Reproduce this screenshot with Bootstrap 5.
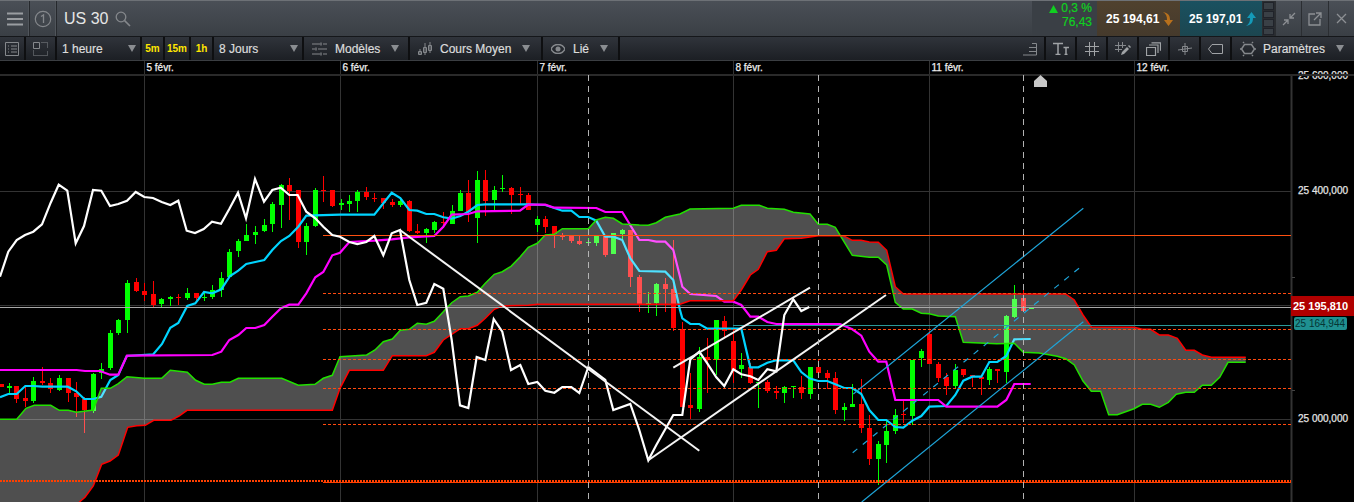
<!DOCTYPE html>
<html lang="fr">

<head>
    <meta charset="UTF-8" />
    <meta name="viewport" content="width=device-width, initial-scale=1.0" />
    <title>US 30</title>
    <link href="https://cdn.jsdelivr.net/npm/bootstrap@5.3.0/dist/css/bootstrap.min.css" rel="stylesheet" />
    <style>
        html, body {
            height: 502px;
            overflow: hidden;
            background: #000;
        }

        body {
            font-family: "Liberation Sans", Arial, sans-serif;
            font-size: 12px;
        }

        .top-bar {
            height: 37px;
            background: linear-gradient(#4a4f56, #3a3f45);
            border-top: 1px solid #6d7176;
            border-bottom: 1px solid #15171a;
            color: #e6e6e6;
        }

        .top-cell {
            height: 35px;
            border-right: 1px solid #26292d;
            box-shadow: inset -1px 0 0 #50555b;
        }

        .menu-cell { width: 30px; }
        .num-cell { width: 27px; }
        .title-txt { font-size: 16px; margin: 0 7px 0 7px; }

        .change-box {
            width: 65px;
            height: 35px;
            background: #3a3f45;
            color: #10d020;
            line-height: 14px;
            padding-right: 5px;
            font-size: 12px;
            -webkit-text-stroke: .2px #10d020;
        }

        .sell-box, .buy-box {
            width: 83px;
            height: 35px;
            color: #fff;
            font-weight: 700;
            padding-left: 9px;
            gap: 3px;
        }

        .sell-box { background: linear-gradient(#50412e, #453a2c); }
        .buy-box { background: linear-gradient(#1a5160, #1c4650); width: 82px; }

        .mini-grid {
            width: 13px;
            height: 35px;
            background: #2a2d31;
            padding: 1px;
            gap: 1px;
        }

        .mini-grid span { flex: 1; background: #3a4046; border: 1px solid #20232a; }
        .win-btn { width: 26.34px; height: 35px; border-left: 1px solid #2b2e32; }

        .tool-bar {
            height: 24px;
            background: linear-gradient(#30343b, #1c1f24);
            border-bottom: 1px solid #3b3e42;
            color: #dcdcdc;
            -webkit-text-stroke: .2px #dcdcdc;
        }

        .tool-cell {
            height: 23px;
            border-right: 2px solid #0e0f11;
        }

        .tool-cell svg { flex: none; }
        .arrow-down {
            width: 0;
            height: 0;
            border-left: 4px solid transparent;
            border-right: 4px solid transparent;
            border-top: 7px solid #8a8d91;
        }

        .arrow-gap { margin-left: 11px; }
        .cell-pad { padding: 0 4px 0 5px; }
        .icon-gap { margin-left: 8px; }
        .param-gap { margin-left: 7px; }
        .tf-txt { color: #ffe600; font-weight: 700; font-size: 10px; -webkit-text-stroke: 0; }
        .w25 { width: 26px; } .w30 { width: 31px; } .w22 { width: 23px; } .w26 { width: 26px; }
        .w85 { width: 85px; } .w90 { width: 90px; } .w105 { width: 106px; } .w133 { width: 133px; }
        .w77 { width: 77px; } .w31 { width: 31px; } .w122 { width: 122px; border-right: 0; }

        .chart-wrap {
            height: 441px;
            background: #000;
        }

        .chart-wrap svg { display: block; }
        .chart-wrap text { stroke-width: .25px; }
        .price-red {
            top: 235px;
            left: 1291px;
            width: 63px;
            height: 20px;
            background: #b00000;
            color: #fff;
            font-weight: 700;
            font-size: 11px;
            line-height: 20px;
            padding-left: 2px;
        }

        .price-teal {
            top: 256px;
            left: 1294px;
            width: 53px;
            height: 13px;
            background: #1f9090;
            color: #063434;
            font-size: 10px;
            line-height: 13px;
            padding-left: 1px;
            border-radius: 2px;
        }
    </style>
</head>

<body>
    <div class="top-bar d-flex">
        <div class="top-cell menu-cell d-flex align-items-center justify-content-center">
            <svg width="16" height="14" viewBox="0 0 16 14"><path d="M0 1.500h16M0 7h16M0 12.500h16" stroke="#9a9da1" stroke-width="2.200"/></svg>
        </div>
        <div class="top-cell num-cell d-flex align-items-center justify-content-center">
            <svg width="18" height="18" viewBox="0 0 18 18"><circle cx="9" cy="9" r="7.700" fill="none" stroke="#85888c" stroke-width="1.200"/><path d="M7 6.500 9.500 5v8" fill="none" stroke="#85888c" stroke-width="1.300"/></svg>
        </div>
        <div class="d-flex align-items-center">
            <span class="title-txt">US 30</span>
            <svg width="16" height="16" viewBox="0 0 16 16"><circle cx="6" cy="6" r="4.800" fill="none" stroke="#85888c" stroke-width="1.300"/><path d="M9.600 9.600 15 15" stroke="#85888c" stroke-width="1.600"/></svg>
        </div>
        <div class="ms-auto d-flex">
            <div class="change-box text-end">
                <div><svg width="9" height="8" viewBox="0 0 9 8"><path d="M0 8 4.500 0 9 8z" fill="#10d020"/></svg> 0,3 %</div>
                <div>76,43</div>
            </div>
            <div class="sell-box d-flex align-items-center">
                <span>25 194,61</span>
                <svg width="12" height="16" viewBox="0 0 12 16"><path d="M1 1c5 1 7 3 7 8h3l-4.500 6L2 9h3c0-4-1-6-4-8z" fill="#b8701c"/></svg>
            </div>
            <div class="buy-box d-flex align-items-center">
                <span>25 197,01</span>
                <svg width="12" height="16" viewBox="0 0 12 16"><path d="M1 15c5-1 7-3 7-8h3L6.500 1 2 7h3c0 4-1 6-4 8z" fill="#149ab8"/></svg>
            </div>
            <div class="mini-grid d-flex flex-column"><span></span><span></span><span></span><span></span></div>
            <div class="win-btn d-flex align-items-center justify-content-center">
                <svg width="14" height="14" viewBox="0 0 14 14"><path d="M8 6 13 1M8 2v4h4M6 8l-5 5M2 8h4v4" fill="none" stroke="#8d9094" stroke-width="1.300"/></svg>
            </div>
            <div class="win-btn d-flex align-items-center justify-content-center">
                <svg width="14" height="14" viewBox="0 0 14 14"><path d="M7 2H1v11h11V7M8 1h5v5M13 1 6 8" fill="none" stroke="#8d9094" stroke-width="1.300"/></svg>
            </div>
            <div class="win-btn d-flex align-items-center justify-content-center">
                <svg width="11" height="11" viewBox="0 0 11 11"><path d="M1 1l9 9M10 1l-9 9" stroke="#8d9094" stroke-width="1.300"/></svg>
            </div>
        </div>
    </div>

    <div class="tool-bar d-flex">
        <div class="tool-cell w25 d-flex align-items-center justify-content-center">
            <svg width="14" height="14" viewBox="0 0 14 14"><path d="M.5.500h13v13H.500zM3 4h1M6 4h6M3 7h1M6 7h6M3 10h1M6 10h6" fill="none" stroke="#85888c"/></svg>
        </div>
        <div class="tool-cell w30 d-flex align-items-center justify-content-center">
            <svg width="15" height="14" viewBox="0 0 15 14"><path d="M.5.500h6v6h-6z" fill="none" stroke="#85888c"/><path d="M8.500.500h6v6M.5 8.500v5h14v-5" fill="none" stroke="#85888c" stroke-dasharray="1 1"/></svg>
        </div>
        <div class="tool-cell w85 d-flex align-items-center justify-content-between cell-pad">1 heure<span class="arrow-down"></span></div>
        <div class="tool-cell w22 d-flex align-items-center justify-content-center tf-txt">5m</div>
        <div class="tool-cell w26 d-flex align-items-center justify-content-center tf-txt">15m</div>
        <div class="tool-cell w22 d-flex align-items-center justify-content-center tf-txt">1h</div>
        <div class="tool-cell w90 d-flex align-items-center justify-content-between cell-pad">8 Jours<span class="arrow-down"></span></div>
        <div class="tool-cell w105 d-flex align-items-center ps-2">
            <svg width="15" height="14" viewBox="0 0 15 14"><path d="M0 2h8M11 2h4M0 7h3M6 7h9M0 12h8M11 12h4M9 .5v3M4 5.500v3M9 10.500v3" stroke="#85888c" stroke-width="1.200" fill="none"/></svg>
            <span class="ms-2">Modèles</span><span class="arrow-down arrow-gap"></span>
        </div>
        <div class="tool-cell w133 d-flex align-items-center ps-2">
            <svg width="14" height="14" viewBox="0 0 14 14"><path d="M.5 9.500h3v3h-3zM5.500 5.500h3v5h-3zM10.500 3.500h3v5h-3zM2 7v5M7 1v12M12 0v11" fill="none" stroke="#85888c"/></svg>
            <span class="icon-gap">Cours Moyen</span><span class="arrow-down arrow-gap"></span>
        </div>
        <div class="tool-cell w77 d-flex align-items-center ps-2">
            <svg width="14" height="10" viewBox="0 0 14 10"><path d="M0 5c3-6 11-6 14 0-3 6-11 6-14 0z" fill="none" stroke="#85888c" stroke-width="1.600"/><circle cx="7" cy="5" r="2.500" fill="#85888c"/></svg>
            <span class="ms-2">Lié</span><span class="arrow-down arrow-gap"></span>
        </div>
        <div class="ms-auto d-flex">
            <div class="tool-cell w31 d-flex align-items-center justify-content-center">
                <svg width="14" height="14" viewBox="0 0 14 14"><path d="M9 1.500h4.500v11.500H0M6 5.500h7.500M6 9.500h7.500" fill="none" stroke="#85888c"/></svg>
            </div>
            <div class="tool-cell w31 d-flex align-items-center justify-content-center">
                <svg width="16" height="13" viewBox="0 0 16 13"><path d="M0 1.500h10M5 1.500V12M2.500 12.500h5M10.500 5.500h5.500M13 5.500V12M11.500 12.500h3" fill="none" stroke="#a0a3a6" stroke-width="1.500"/></svg>
            </div>
            <div class="tool-cell w31 d-flex align-items-center justify-content-center">
                <svg width="14" height="14" viewBox="0 0 14 14"><path d="M4.500 0v14M9.500 0v14M0 4.500h14M0 9.500h14" stroke="#a0a3a6"/></svg>
            </div>
            <div class="tool-cell w31 d-flex align-items-center justify-content-center">
                <svg width="16" height="14" viewBox="0 0 16 14"><path d="M3.500 0v10M7.500 0v6M0 3.500h11M0 7.500h7" stroke="#85888c"/><path d="M6 13l1-3 5-5 2 2-5 5z" fill="#a0a3a6"/><path d="M13 4l1-1 2 2-1 1z" fill="#a0a3a6"/></svg>
            </div>
            <div class="tool-cell w31 d-flex align-items-center justify-content-center">
                <svg width="15" height="14" viewBox="0 0 15 14"><path d="M.5 5.500h9v8h-9z" fill="none" stroke="#a0a3a6" stroke-width="1.200"/><path d="M3 3h9v8M5.500 .8h9v8" fill="none" stroke="#a0a3a6" stroke-width="1.200"/></svg>
            </div>
            <div class="tool-cell w31 d-flex align-items-center justify-content-center">
                <svg width="14" height="12" viewBox="0 0 14 12"><path d="M4.500 3.500h5v5h-5zM7 0v12M0 7l14-2" fill="none" stroke="#85888c"/></svg>
            </div>
            <div class="tool-cell w31 d-flex align-items-center justify-content-center">
                <svg width="15" height="10" viewBox="0 0 15 10"><path d="M14.500.5H4L.5 5 4 9.500h10.500z" fill="none" stroke="#a0a3a6"/></svg>
            </div>
            <div class="tool-cell w122 d-flex align-items-center ps-2">
                <svg width="16" height="16" viewBox="0 0 16 16"><path d="M4.500 3.500h7l3 4.500-3 4.500h-7L1.500 8z" fill="none" stroke="#85888c" stroke-width="1.500"/><path d="M4 2 3 1M12 2l1-1M15 8h1M0 8h1M4 14l-1 1M12 14l1 1" stroke="#85888c" stroke-width="1.500"/></svg>
                <span class="param-gap">Paramètres</span><span class="arrow-down arrow-gap"></span>
            </div>
        </div>
    </div>

    <div class="chart-wrap position-relative">
        <svg id="chart" width="1354" height="441" viewBox="0 61 1354 441"></svg>
        <div class="price-red position-absolute">25 195,810</div>
        <div class="price-teal position-absolute">25 164,944</div>
    </div>

    <script src="https://cdn.jsdelivr.net/npm/bootstrap@5.3.0/dist/js/bootstrap.bundle.min.js"></script>
    <script>
        // coordinates below were read off 3x crops, x0 is the left edge of each crop, y0 is always 170
        const X0 = [0, 340, 680, 1014];
        const px = (crop, x) => X0[crop] + x / 3;
        const py = y => 170 + y / 3;

        function serie(parts) {
            let pts = [];
            parts.forEach((list, crop) => {
                if (!list) return;
                list.forEach(p => pts.push([px(crop, p[0]), py(p[1])]));
            });
            return pts;
        }

        const asPath = pts => pts.map((p, i) => (i ? "L" : "M") + p[0].toFixed(1) + " " + p[1].toFixed(1)).join("");

        const candles = [
            // crop 0
            [0, "2 642 642 650 650 r|26 640 648 654 668 g|49 648 648 686 700 r|76 652 684 693 710 r|100 622 633 693 700 g|127 592 633 640 645 r|151 625 640 658 670 r|178 615 624 660 662 g|203 624 624 670 695 r|229 636 670 680 740 r|253 680 686 720 788 r|280 610 612 722 730 g|304 580 598 610 628 g|331 480 490 594 600 g|355 447 450 488 496 g|382 330 340 450 488 g|409 324 336 362 365 r|433 340 364 374 392 r|460 334 372 404 410 r|484 385 388 402 410 g|511 378 382 386 408 g|535 372 380 383 405 r|562 354 370 384 390 g|587 370 370 384 392 r|613 370 380 382 392 g|637 346 360 380 386 g|664 306 324 360 380 g|688 238 246 322 325 g|715 208 213 243 260 g|739 162 195 212 212 g|766 168 186 194 222 g|793 148 165 183 186 g|817 95 102 162 186 g|844 42 46 104 174 g|868 24 45 64 150 r|895 60 60 216 234 r|919 160 168 216 255 g|946 55 60 168 170 g|970 18 60 64 95 r|997 60 60 108 112 r"],
            // crop 1
            [1, "2 88 100 105 120 g|28 75 93 102 125 g|52 60 66 92 125 g|79 52 66 81 90 r|103 70 84 86 95 r|130 85 85 100 118 r|157 88 95 105 110 r|181 85 93 105 112 g|208 90 93 183 185 r|232 162 183 188 192 r|259 175 178 190 220 g|283 153 156 180 190 g|310 125 155 160 175 r|335 105 124 162 162 g|361 60 69 122 122 g|385 30 69 125 155 r|412 2 30 143 218 g|436 0 30 94 138 r|463 48 60 90 120 g|487 15 55 57 65 g|514 52 54 75 132 r|541 52 72 75 105 r|565 68 75 120 120 r|592 138 148 165 185 g|616 138 148 172 188 r|643 170 168 192 235 r|667 190 196 200 210 r|694 198 198 213 218 r|718 198 213 222 225 r|745 205 216 220 225 g|769 198 198 218 228 g|796 198 198 255 260 r|820 188 190 252 252 g|847 178 180 192 210 g|871 180 180 322 350 r|898 316 322 402 425 r|925 366 399 401 430 g|949 338 342 400 438 g|976 325 342 356 425 r|1000 210 358 473 482 r"],
            // crop 2
            [2, "7 455 478 710 710 r|31 608 705 714 746 r|58 530 562 718 725 g|82 505 562 570 668 r|109 450 450 570 615 g|133 438 453 484 500 r|160 480 513 600 640 r|184 550 586 598 625 g|211 580 590 640 642 r|235 636 636 640 714 g|262 630 636 662 670 r|289 648 663 668 688 r|313 648 652 668 698 g|340 648 648 650 685 g|364 618 652 668 688 r|391 590 591 671 686 g|415 570 591 608 620 r|442 600 609 624 656 r|466 605 624 720 732 r|493 700 711 719 752 g|517 642 702 710 710 g|544 628 702 773 788 r|568 735 774 866 885 r|595 812 822 866 945 g|619 750 783 824 880 g|646 718 736 782 792 g|670 692 732 735 760 r|697 570 570 738 766 g|724 536 544 563 590 g|748 482 493 582 582 r|775 575 582 624 636 r|799 610 622 647 674 r|826 582 600 648 654 g|850 598 598 614 620 r|877 615 616 619 652 r|904 618 622 628 674 r|928 592 597 629 644 g|952 598 598 602 638 r|979 435 438 605 640 g|1003 346 387 440 445 g"],
            // crop 3
            [3, "28 346 384 422 425 r|52 414 414 418 418 g"]
        ];

        const white = serie([
            [[0, 320], [25, 245], [50, 210], [75, 195], [100, 185], [126, 163], [152, 98], [176, 44], [202, 62], [227, 220], [252, 168], [279, 60], [304, 62], [330, 108], [355, 102], [381, 92], [407, 66], [433, 81], [459, 84], [485, 96], [511, 105], [535, 92], [560, 182], [585, 189], [611, 177], [636, 155], [663, 161], [688, 117], [714, 68], [738, 145], [765, 27], [792, 95], [817, 60], [842, 53], [868, 75], [893, 75], [919, 125], [946, 145], [970, 170], [997, 195]],
            [[0, 200], [28, 216], [52, 222], [79, 216], [103, 198], [130, 256], [155, 190], [180, 180], [208, 330], [232, 405], [259, 398], [283, 342], [310, 356], [335, 510], [360, 706], [385, 714], [410, 561], [436, 570], [461, 447], [487, 485], [513, 600], [541, 585], [565, 642], [592, 636], [616, 662], [643, 668], [667, 651], [694, 651], [718, 669], [745, 591], [796, 630], [820, 720], [871, 702], [898, 780], [925, 871], [949, 825], [1000, 735]],
            [[7, 735], [31, 568], [58, 545], [82, 580], [109, 622], [133, 648], [160, 598], [184, 613], [211, 619], [235, 630], [262, 598], [289, 604], [313, 435], [340, 388], [364, 423], [388, 411]]
        ]);

        const cyan = serie([
            [[0, 682], [25, 672], [50, 672], [76, 648], [100, 648], [127, 650], [203, 650], [229, 664], [253, 687], [280, 687], [304, 680], [331, 630], [355, 615], [380, 558], [460, 553], [486, 522], [511, 473], [535, 459], [562, 408], [586, 400], [612, 366], [637, 370], [664, 358], [690, 318], [715, 302], [739, 282], [766, 276], [793, 270], [817, 240], [843, 213], [868, 198], [895, 170], [919, 137]],
            [[0, 134], [103, 134], [155, 68], [181, 84], [208, 120], [232, 122], [259, 132], [283, 132], [310, 142], [335, 146], [361, 138], [385, 125], [412, 105], [436, 103], [565, 103], [616, 105], [643, 114], [667, 122], [694, 122], [718, 141], [745, 141], [769, 152], [796, 200], [820, 200], [847, 210], [871, 265], [898, 303], [976, 305], [1000, 330]],
            [[0, 420], [7, 445], [31, 462], [58, 462], [82, 476], [184, 476], [211, 592], [235, 592], [262, 578], [289, 571], [340, 571], [364, 606], [388, 625], [415, 633], [442, 633], [466, 643], [493, 654], [517, 654], [544, 672], [568, 720], [595, 750], [619, 750], [646, 771], [670, 773], [697, 752], [724, 738], [748, 710], [799, 708], [826, 675], [850, 632], [877, 620], [904, 620], [928, 576], [952, 576], [979, 558], [1003, 508]],
            [[50, 507]]
        ]);

        const magenta = serie([
            [[0, 600], [230, 600], [255, 603], [300, 603], [330, 614], [355, 614], [381, 557], [637, 555], [664, 545], [688, 510], [715, 495], [739, 474], [766, 474], [793, 465], [817, 440], [843, 415], [868, 404], [895, 404], [919, 370], [946, 322], [970, 306], [997, 256]],
            [[0, 248], [28, 216], [103, 212], [155, 208], [208, 202], [283, 198], [310, 170], [335, 134], [385, 132], [412, 124], [540, 122], [565, 104], [616, 104], [643, 113], [769, 114], [796, 126], [847, 126], [898, 210], [925, 210], [949, 215], [976, 215], [1000, 240]],
            [[0, 320], [7, 350], [31, 372], [109, 378], [133, 395], [160, 395], [184, 405], [211, 440], [235, 440], [262, 456], [289, 462], [480, 462], [517, 478], [544, 497], [568, 545], [595, 575], [619, 575], [646, 690], [775, 690], [799, 710], [952, 710], [979, 690], [1003, 642]],
            [[50, 642]]
        ]);

        const cloudTop = serie([
            [[0, 748], [50, 748], [78, 715], [103, 706], [152, 706], [178, 721], [205, 721], [229, 727], [280, 720], [304, 655], [331, 655], [355, 641], [381, 620], [433, 625], [485, 625], [511, 601], [562, 607], [587, 631], [613, 643], [637, 643], [664, 637], [690, 637], [715, 625], [845, 625], [895, 646], [945, 643], [970, 625], [997, 616]],
            [[0, 560], [80, 555], [105, 540], [130, 515], [157, 507], [181, 481], [208, 478], [232, 460], [259, 463], [283, 454], [310, 425], [335, 398], [361, 380], [385, 378], [412, 367], [436, 340], [463, 313], [487, 305], [513, 289], [541, 260], [565, 232], [592, 220], [616, 195], [643, 193], [667, 176], [745, 176], [769, 150], [796, 142], [820, 145], [847, 162], [898, 165], [925, 166], [949, 158], [976, 142]],
            [[0, 132], [30, 117], [160, 115], [184, 106], [238, 106], [262, 115], [313, 118], [340, 127], [390, 132], [415, 163], [442, 163], [466, 172], [517, 256], [568, 262], [595, 262], [620, 285], [646, 397], [670, 417], [697, 417], [724, 430], [748, 431], [775, 438], [826, 440], [850, 517], [950, 521], [1003, 520]],
            [[28, 547], [75, 549], [130, 559], [155, 566], [181, 585], [207, 633], [232, 664], [260, 664], [284, 734], [310, 734], [360, 716], [385, 703], [410, 703], [436, 712], [463, 697], [487, 673], [515, 667], [541, 667], [565, 646], [592, 646], [617, 622], [642, 577], [695, 577]]
        ]);

        const cloudBot = serie([
            [[238, 996], [255, 982], [280, 948], [305, 883], [330, 873], [355, 855], [383, 772], [410, 767], [436, 766], [461, 751], [513, 751], [537, 738], [561, 721], [997, 721]],
            [[0, 655], [28, 601], [130, 601], [157, 557], [259, 557], [283, 547], [310, 510], [361, 476], [385, 476], [412, 466], [436, 445], [463, 418], [487, 408], [565, 406], [592, 403]],
            [[0, 403], [30, 392], [160, 392], [184, 360], [211, 315], [235, 298], [262, 245], [289, 241], [313, 206], [364, 205], [415, 197], [490, 197], [517, 211], [543, 211], [568, 216], [595, 217], [620, 241], [646, 350], [670, 372]],
            [[155, 372], [181, 390], [207, 435], [232, 471], [360, 472], [385, 478], [410, 478], [436, 495], [463, 495], [490, 505], [515, 541], [541, 541], [565, 555], [592, 562], [695, 562]]
        ]);

        let out = "";

        function line(x1, y1, x2, y2, color, w, extra) {
            out += `<line x1="${x1}" y1="${y1}" x2="${x2}" y2="${y2}" stroke="${color}" stroke-width="${w}" ${extra || ""}/>`;
        }

        // date row
        const dates = [[144.5, "5 févr."], [340.5, "6 févr."], [537.5, "7 févr."], [733.5, "8 févr."], [929.5, "11 févr."], [1134.5, "12 févr."]];
        dates.forEach(d => {
            line(d[0], 61, d[0], 502, "#333", 1);
            out += `<text x="${d[0] + 2}" y="71" fill="#eee" stroke="#eee" font-size="10" font-family="Liberation Sans">${d[1]}</text>`;
        });

        // price axis labels, grid
        line(0, 191.500, 1291, 191.500, "#333", 1);
        line(0, 419.500, 1291, 419.500, "#333", 1);
        line(0, 305.500, 1291, 305.500, "#333", 1);
        line(1291.500, 75, 1291.500, 502, "#333", 2);
        line(1292, 277.500, 1295, 277.500, "#444", 1);
        line(1292, 390.500, 1295, 390.500, "#444", 1);
        [[79, "25 600,000"], [194, "25 400,000"], [422, "25 000,000"]].forEach(l => {
            out += `<text x="1298" y="${l[0]}" fill="#e4e4e4" stroke="#e4e4e4" font-size="10" font-family="Liberation Sans">${l[1]}</text>`;
        });
        out += `<rect x="0" y="74" width="1354" height="2" fill="#2a2a2a"/>`;

        // candles
        candles.forEach(group => {
            group[1].split("|").forEach(c => {
                const v = c.split(" ");
                const x = Math.round(px(group[0], +v[0]));
                const col = v[5] === "g" ? "#00ff00" : "#ff0000";
                const top = py(+v[2]), h = Math.max(1, (+v[3] - +v[2]) / 3);
                out += `<rect x="${x}" y="${py(+v[1])}" width="1" height="${(+v[4] - +v[1]) / 3}" fill="${col}" shape-rendering="crispEdges"/>`;
                out += `<rect x="${x - 2}" y="${top}" width="5" height="${h}" fill="${col}" shape-rendering="crispEdges"/>`;
            });
        });

        const stroke = (pts, color, w) => {
            out += `<path d="${asPath(pts)}" fill="none" stroke="${color}" stroke-width="${w}"/>`;
        };

        stroke(cyan, "#00d4ff", 2.200);
        stroke(magenta, "#ff00ff", 2.200);

        // cloud goes over candles and both averages, that's why they turn lighter inside it
        const poly = cloudTop.concat(cloudBot.slice().reverse(), [[0, 502]]);
        out += `<path d="${asPath(poly)}Z" fill="rgba(255,255,255,.31)"/>`;
        stroke(cloudTop, "#22e000", 1.500);
        stroke(cloudBot, "#ff0000", 1.500);

        // horizontal levels
        [293.5, 329.5, 359.5, 388.5, 424.5].forEach(y => line(323, y, 1291, y, "#ff4a10", 1, 'stroke-dasharray="3 2"'));
        line(323, 235.5, 1291, 235.5, "#ff5010", 1);
        line(0, 481, 1291, 481, "#ff4000", 2, 'stroke-dasharray="2 1"');
        line(323, 482.5, 1291, 482.5, "#ff4000", 1);
        line(733, 325.5, 1291, 325.5, "#2a9a9a", 1);
        line(0, 307.5, 1291, 307.5, "#a8a8a8", 1);

        stroke(white, "#ffffff", 2.200);

        // drawn trend lines
        line(400, 230, 699.3, 450.7, "#f4f4f4", 2);
        line(648.3, 460.3, 886, 295, "#f4f4f4", 2);
        line(673.3, 367.7, 810, 287.7, "#f4f4f4", 2);
        line(853.3, 394, 1083.3, 208.3, "#1ea4d8", 1.200);
        line(861.7, 502, 1083.3, 321.7, "#1ea4d8", 1.200);
        line(852.7, 452.7, 1081.7, 266, "#1ea4d8", 1.200, 'stroke-dasharray="6 7"');

        // dashed crosshair verticals
        [588.5, 818.5, 1023.5].forEach(x => line(x, 75, x, 502, "#b4b4b4", 1, 'stroke-dasharray="6 5"'));

        // marker
        out += `<path d="M1034 87V81L1040.500 75 1047 81V87Z" fill="#c8c8c8"/>`;

        document.getElementById("chart").innerHTML = out;
    </script>
</body>

</html>
